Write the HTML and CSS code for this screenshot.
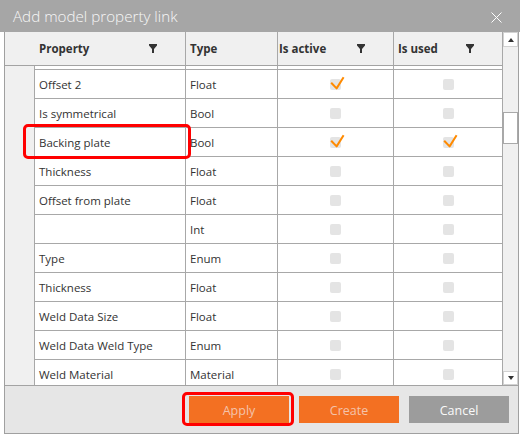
FILE: index.html
```html
<!DOCTYPE html>
<html lang="en">
<head>
<meta charset="utf-8">
<title>Add model property link</title>
<link rel="stylesheet" href="styles.css">
</head>
<body>
<div class="dialog">
  <div class="titlebar">
    <span class="title">Add model property link</span>
    <svg class="close" viewBox="0 0 11 11"><path d="M0.5 0.5 L10.5 10.5 M10.5 0.5 L0.5 10.5" stroke="#fff" stroke-width="1" fill="none"/></svg>
  </div>
  <div class="frame">
    <div class="gridarea">
      <div class="grid">
        <div class="row head">
          <div class="cell rh"></div>
          <div class="cell">Property<svg class="funnel" viewBox="0 0 8 9"><polygon points="0,0 8,0 8,1.5 5,5 5,9 3,9 3,5 0,1.5"/></svg></div>
          <div class="cell">Type</div>
          <div class="cell tight">Is active<svg class="funnel" viewBox="0 0 8 9"><polygon points="0,0 8,0 8,1.5 5,5 5,9 3,9 3,5 0,1.5"/></svg></div>
          <div class="cell">Is used<svg class="funnel" viewBox="0 0 8 9"><polygon points="0,0 8,0 8,1.5 5,5 5,9 3,9 3,5 0,1.5"/></svg></div>
        </div>
        <div class="viewport">
          <div class="rows">
            <!-- row scrolled mostly out of view above -->
            <div class="row"><div class="cell rh"></div><div class="cell"></div><div class="cell"></div><div class="cell ck"></div><div class="cell ck"></div></div>
            <div class="row"><div class="cell rh"></div><div class="cell">Offset 2</div><div class="cell">Float</div><div class="cell ck"><span class="cb on"><svg viewBox="0 0 15 14"><path d="M1.2 6.8 L6.6 12.4 L13.6 1.2"/></svg></span></div><div class="cell ck"><span class="cb"></span></div></div>
            <div class="row"><div class="cell rh"></div><div class="cell">Is symmetrical</div><div class="cell">Bool</div><div class="cell ck"><span class="cb"></span></div><div class="cell ck"><span class="cb"></span></div></div>
            <div class="row"><div class="cell rh"></div><div class="cell">Backing plate</div><div class="cell">Bool</div><div class="cell ck"><span class="cb on"><svg viewBox="0 0 15 14"><path d="M1.2 6.8 L6.6 12.4 L13.6 1.2"/></svg></span></div><div class="cell ck"><span class="cb on"><svg viewBox="0 0 15 14"><path d="M1.2 6.8 L6.6 12.4 L13.6 1.2"/></svg></span></div></div>
            <div class="row"><div class="cell rh"></div><div class="cell">Thickness</div><div class="cell">Float</div><div class="cell ck"><span class="cb"></span></div><div class="cell ck"><span class="cb"></span></div></div>
            <div class="row"><div class="cell rh"></div><div class="cell">Offset from plate</div><div class="cell">Float</div><div class="cell ck"><span class="cb"></span></div><div class="cell ck"><span class="cb"></span></div></div>
            <div class="row"><div class="cell rh"></div><div class="cell"></div><div class="cell">Int</div><div class="cell ck"><span class="cb"></span></div><div class="cell ck"><span class="cb"></span></div></div>
            <div class="row"><div class="cell rh"></div><div class="cell">Type</div><div class="cell">Enum</div><div class="cell ck"><span class="cb"></span></div><div class="cell ck"><span class="cb"></span></div></div>
            <div class="row"><div class="cell rh"></div><div class="cell">Thickness</div><div class="cell">Float</div><div class="cell ck"><span class="cb"></span></div><div class="cell ck"><span class="cb"></span></div></div>
            <div class="row"><div class="cell rh"></div><div class="cell">Weld Data Size</div><div class="cell">Float</div><div class="cell ck"><span class="cb"></span></div><div class="cell ck"><span class="cb"></span></div></div>
            <div class="row"><div class="cell rh"></div><div class="cell">Weld Data Weld Type</div><div class="cell">Enum</div><div class="cell ck"><span class="cb"></span></div><div class="cell ck"><span class="cb"></span></div></div>
            <div class="row"><div class="cell rh"></div><div class="cell">Weld Material</div><div class="cell">Material</div><div class="cell ck"><span class="cb"></span></div><div class="cell ck"><span class="cb"></span></div></div>
          </div>
        </div>
      </div>
      <div class="vscroll">
        <div class="sbtn"><span class="arrow up"></span></div>
        <div class="thumb"></div>
        <div class="sbtn down"><span class="arrow dn"></span></div>
      </div>
    </div>
    <div class="footer">
      <button class="btn primary">Apply</button>
      <button class="btn primary">Create</button>
      <button class="btn neutral">Cancel</button>
    </div>
  </div>
  <div class="mark mark-row"></div>
  <div class="mark mark-apply"></div>
</div>
</body>
</html>
```
FILE: styles.css
```css
body {
  margin: 0;
  background: #fff;
  font-family: "Open Sans", "Noto Sans", sans-serif;
  color: #333;
}

.dialog {
  position: relative;
  width: 520px;
}

/* window caption */
.titlebar {
  height: 32px;
  background: #a6a6a6;
  display: flex;
  align-items: center;
  justify-content: space-between;
  padding: 2px 18px 0 13px;
  box-sizing: border-box;
}
.title {
  color: #f7f7f7;
  font-size: 15.2px;
  font-weight: 300;
  line-height: 1;
}
.close {
  width: 11px;
  height: 11px;
}

/* dialog body */
.frame {
  margin-left: 4px;
  width: 515px;
  box-sizing: border-box;
  border: 1px solid #a0a0a0;
  border-top: 0;
}

.gridarea {
  display: flex;
  border-bottom: 1px solid #a3a3a3;
}
.grid {
  width: 498px;
}

.row {
  display: grid;
  grid-template-columns: 30px 151px 92px 116px 109px;
}
.cell {
  box-sizing: border-box;
  height: 29px;
  border-right: 1px solid #a8a8a8;
  border-bottom: 1px solid #a8a8a8;
  display: flex;
  align-items: center;
  padding-left: 4px;
  font-size: 11.5px;
  white-space: nowrap;
}
.cell.rh {
  background: #f0f0f0;
  border-bottom: 0;
}

.head .cell {
  height: 34px;
  background: #f0f0f0;
  font-weight: 700;
  padding-right: 28px;
  border-bottom: 1px solid #a3a3a3;
}
.head .cell.tight {
  padding-left: 1px;
}
.funnel {
  width: 8px;
  height: 9px;
  margin-left: auto;
  fill: #333;
}

.viewport {
  height: 319px;
  overflow: hidden;
}
.rows {
  margin-top: -25px;
}

/* checkboxes */
.cell.ck {
  justify-content: center;
  padding-left: 0;
}
.cb {
  position: relative;
  width: 11px;
  height: 11px;
  background: #e4e4e4;
  border-radius: 2px;
}
.cb svg {
  position: absolute;
  left: 0;
  top: -3px;
  width: 15px;
  height: 14px;
  fill: none;
  stroke: #ff8a00;
  stroke-width: 2;
  stroke-linejoin: round;
}

/* vertical scrollbar */
.vscroll {
  width: 15px;
  background: #f0f0f0;
  display: flex;
  flex-direction: column;
}
.sbtn {
  box-sizing: border-box;
  height: 15px;
  background: #fff;
  border: 1px solid #d2d2d2;
  display: flex;
  align-items: center;
  justify-content: center;
}
.sbtn.down {
  height: 14px;
  margin-top: auto;
}
.thumb {
  box-sizing: border-box;
  height: 32px;
  margin-top: 65px;
  background: #fff;
  border: 1px solid #a9a9a9;
}
.arrow {
  width: 0;
  height: 0;
  border-left: 3px solid transparent;
  border-right: 3px solid transparent;
}
.arrow.up {
  border-bottom: 4px solid #333;
}
.arrow.dn {
  border-top: 4px solid #333;
}

/* button strip */
.footer {
  height: 47px;
  background: #e6e6e6;
  display: flex;
  align-items: center;
  justify-content: flex-end;
  gap: 10px;
  padding-right: 9px;
}
.btn {
  width: 100px;
  height: 27px;
  border: 0;
  margin: 0;
  padding: 1px 0 0;
  font-family: "Open Sans", "Noto Sans", sans-serif;
  font-size: 12.5px;
}
.btn.primary {
  background: #f37022;
  color: #f3c3ab;
}
.btn.neutral {
  background: #9c9c9c;
  color: #fafafa;
}

/* red highlight frames */
.mark {
  position: absolute;
  box-sizing: border-box;
  border: 3px solid #ff0000;
  border-radius: 5px;
}
.mark-row {
  left: 23px;
  top: 124px;
  width: 168px;
  height: 35px;
}
.mark-apply {
  left: 182px;
  top: 392px;
  width: 112px;
  height: 34px;
}
```
